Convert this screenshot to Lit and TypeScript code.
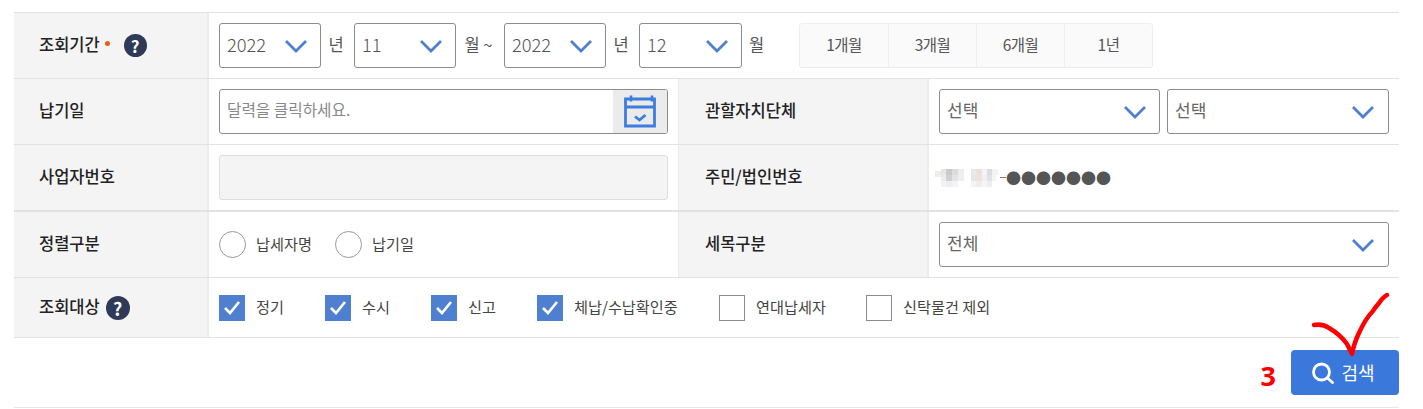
import { LitElement, html, css, svg } from 'lit';
import { customElement } from 'lit/decorators.js';

const chevron = html`<svg class="chev" width="24" height="14" viewBox="0 0 24 14" fill="none"><path d="M2 2l10 10L22 2" stroke="#4f80cf" stroke-width="2.8"/></svg>`;

const help = (size: number) => html`<span class="help" style="width:${size}px;height:${size}px;font-size:${size - 6}px">?</span>`;

const mosaic: [number, number, number, number, string][] = [
  [0, 2, 6, 6, '#f3ece8'], [6, 0, 5, 6, '#e6e6e8'], [11, 0, 6, 6, '#c9cad0'], [17, 0, 6, 6, '#dcdcdc'], [23, 0, 6, 6, '#ededed'],
  [6, 6, 5, 6, '#ececec'], [11, 6, 6, 6, '#d0d0d4'], [17, 6, 6, 6, '#e4e4e4'], [23, 6, 6, 6, '#efefef'],
  [6, 12, 5, 6, '#f2f2f2'], [11, 12, 6, 6, '#eeeeee'], [17, 12, 6, 6, '#f4f4f4'],
  [36, 0, 5, 6, '#e8e8e8'], [41, 0, 6, 6, '#ecdfd8'], [47, 0, 5, 6, '#eef4f9'], [52, 0, 5, 6, '#dcdcdc'], [57, 0, 6, 6, '#f2f2f2'],
  [36, 6, 5, 6, '#e6e6e6'], [41, 6, 6, 6, '#eee2da'], [47, 6, 5, 6, '#e9f2f9'], [52, 6, 5, 6, '#e2e2e2'], [57, 6, 4, 6, '#f4f4f4'],
  [36, 12, 5, 6, '#f3f3f3'], [41, 12, 6, 6, '#f0ece8'], [47, 12, 5, 6, '#f5f5f5'], [52, 12, 5, 6, '#eeeeee'],
];

@customElement('app-root')
export class AppRoot extends LitElement {
  static styles = css`
    :host {
      display: block;
      height: 409px;
      position: relative;
      overflow: hidden;
      background: #fff;
      font-family: "Noto Sans CJK KR", "Noto Sans", sans-serif;
      color: #555;
      font-size: 15px;
    }
    /* the CJK face sits low in its line box, this lifts the text */
    .t { padding-bottom: 4px; }
    .table {
      margin: 12px 24px 0 14px;
      border-top: 1px solid #e2e2e2;
      border-bottom: 1px solid #e2e2e2;
    }
    .row {
      display: grid;
      grid-template-columns: 195px 469px 251px 1fr;
      height: 65px;
      border-bottom: 1px solid #e2e2e2;
    }
    .row.full { grid-template-columns: 195px 1fr; }
    .row.thick { height: 65px; border-bottom-width: 2px; }
    .row.last { height: 59px; border-bottom: none; }
    .th {
      display: flex;
      align-items: center;
      gap: 6px;
      background: #f4f4f4;
      border-right: 2px solid #ececec;
      padding-left: 25px;
      font-size: 16.5px;
      font-weight: 500;
      color: #222;
    }
    .th.mid { border-left: 1px solid #ececec; padding-left: 26px; }
    .req { width: 5px; height: 5px; border-radius: 50%; background: #f05a14; margin: 0 8px 4px -1px; }
    .help {
      display: flex;
      align-items: center;
      justify-content: center;
      border-radius: 50%;
      background: #2f3a58;
      color: #fff;
      font-weight: 700;
      line-height: 1;
    }
    .td { display: flex; align-items: center; padding-left: 10px; }
    .td.right { padding: 0 10px; gap: 7px; }
    .sel {
      box-sizing: border-box;
      display: flex;
      align-items: center;
      justify-content: space-between;
      height: 45px;
      padding: 0 12px 0 7px;
      border: 1px solid #8c8c8c;
      border-radius: 3px;
      font-size: 17px;
      color: #666;
      background: #fff;
    }
    .sel.y { width: 102px; font-size: 18.3px; font-weight: 300; color: #555; }
    .sel.y.wide { width: 103px; }
    .sel.half { width: 221px; }
    .sel.grow { flex: 1; }
    .sel.grow .chev { margin-right: 1px; }
    .unit { box-sizing: border-box; width: 33px; padding-right: 3px; text-align: center; font-size: 16.5px; color: #555; }
    .unit.tilde { width: 48px; }
    .unit.gap { width: 57px; text-align: left; padding-left: 7px; padding-right: 0; }
    .periods { display: flex; height: 45px; box-sizing: border-box; border: 1px solid #eee; border-radius: 3px; background: #fafafa; }
    .periods span {
      display: flex;
      align-items: center;
      justify-content: center;
      box-sizing: border-box;
      width: 88px;
      padding-bottom: 3px;
      font-size: 15.5px;
      color: #555;
      letter-spacing: -0.5px;
    }
    .periods span + span { border-left: 1px solid #eee; }
    .input {
      box-sizing: border-box;
      display: flex;
      align-items: center;
      justify-content: space-between;
      width: 449px;
      height: 45px;
      border: 1px solid #8c8c8c;
      border-radius: 3px;
      padding-left: 7px;
      font-size: 15.7px;
      color: #888;
      overflow: hidden;
    }
    .cal {
      display: flex;
      align-items: center;
      justify-content: center;
      width: 54px;
      height: 100%;
      background: #ebebeb;
    }
    .input.off { background: #f4f4f4; border-color: #ddd; }
    .rrn { display: flex; align-items: center; padding-left: 6px; font-size: 15px; color: #555; }
    .mosaic { display: block; }
    .dash { width: 6px; height: 1px; background: #777; }
    .dots { font-size: 15px; line-height: 1; color: #555; }
    .opts { display: flex; align-items: center; }
    .radio { width: 25px; height: 25px; border: 1px solid #999; border-radius: 50%; margin-right: 10px; background: #fff; }
    .opt { display: flex; align-items: center; font-size: 15.2px; color: #444; }
    .box { box-sizing: border-box; width: 26px; height: 26px; margin-right: 11px; border: 1px solid #8c8c8c; background: #fff; }
    .box.on { display: flex; align-items: center; justify-content: center; border: none; background: #4f80cf; }
    .foot { display: flex; justify-content: flex-end; align-items: center; gap: 15px; margin: 12px 24px 0 14px; }
    .num { font-size: 27px; font-weight: 700; color: #f00; font-family: "Open Sans", sans-serif; line-height: 45px; position: relative; top: 3px; }
    .search {
      box-sizing: border-box;
      display: flex;
      align-items: center;
      justify-content: center;
      gap: 6px;
      width: 108px;
      height: 45px;
      padding-right: 4px;
      border-radius: 4px;
      background: #3a78db;
      color: #fff;
      font-size: 18px;
    }
    .search .t { padding-bottom: 2px; }
    .rule { height: 1px; background: #e8e8e8; margin: 12px 24px 0 14px; }
    .pen { position: absolute; left: 0; top: 0; pointer-events: none; }
  `;

  private sel(value: string, cls = 'y') {
    return html`<div class="sel ${cls}"><span class="t">${value}</span>${chevron}</div>`;
  }

  private check(label: string, on: boolean, width: number) {
    return html`<label class="opt" style="width:${width}px">
      <span class="box ${on ? 'on' : ''}">${on
        ? html`<svg width="18" height="16" viewBox="0 0 18 16" fill="none"><path d="M2 8l5 5 9-11" stroke="#fff" stroke-width="2.6"/></svg>`
        : ''}</span><span class="t">${label}</span></label>`;
  }

  render() {
    return html`
      <div class="table">
        <div class="row full">
          <div class="th"><span class="t">조회기간</span><span class="req"></span>${help(23)}</div>
          <div class="td">
            ${this.sel('2022')}<span class="unit t">년</span>
            ${this.sel('11')}<span class="unit tilde t">월 ~</span>
            ${this.sel('2022')}<span class="unit t">년</span>
            ${this.sel('12', 'y wide')}<span class="unit gap t">월</span>
            <div class="periods">
              <span>1개월</span><span>3개월</span><span>6개월</span><span>1년</span>
            </div>
          </div>
        </div>
        <div class="row">
          <div class="th"><span class="t">납기일</span></div>
          <div class="td">
            <div class="input">
              <span class="t">달력을 클릭하세요.</span>
              <span class="cal">
                <svg width="36" height="36" viewBox="0 0 36 36" fill="none" stroke="#3d7ddf" stroke-width="2.8">
                  <path d="M3.5 5h29v8h-29zM3.5 13v19h29V13"/>
                  <path d="M9 1.5v6M30 1.5v6" stroke-width="2.6"/>
                  <path d="M13 22.5l4.5 3.5 6-5"/>
                </svg>
              </span>
            </div>
          </div>
          <div class="th mid"><span class="t">관할자치단체</span></div>
          <div class="td right">${this.sel('선택', 'half')}${this.sel('선택', 'grow')}</div>
        </div>
        <div class="row thick">
          <div class="th"><span class="t">사업자번호</span></div>
          <div class="td"><div class="input off"></div></div>
          <div class="th mid"><span class="t">주민/법인번호</span></div>
          <div class="rrn">
            <svg class="mosaic" width="65" height="18" viewBox="0 0 65 18">
              ${mosaic.map(([x, y, w, h, c]) => svg`<rect x=${x} y=${y} width=${w} height=${h} fill=${c}></rect>`)}
            </svg>
            <span class="dash"></span>
            <span class="dots">●●●●●●●</span>
          </div>
        </div>
        <div class="row">
          <div class="th"><span class="t">정렬구분</span></div>
          <div class="td opts">
            <label class="opt" style="width:116px"><span class="radio"></span><span class="t">납세자명</span></label>
            <label class="opt"><span class="radio"></span><span class="t">납기일</span></label>
          </div>
          <div class="th mid"><span class="t">세목구분</span></div>
          <div class="td right">${this.sel('전체', 'grow')}</div>
        </div>
        <div class="row full last">
          <div class="th"><span class="t">조회대상</span>${help(24)}</div>
          <div class="td opts">
            ${this.check('정기', true, 106)}
            ${this.check('수시', true, 106)}
            ${this.check('신고', true, 106)}
            ${this.check('체납/수납확인중', true, 182)}
            ${this.check('연대납세자', false, 147)}
            ${this.check('신탁물건 제외', false, 160)}
          </div>
        </div>
      </div>
      <div class="foot">
        <span class="num">3</span>
        <div class="search">
          <svg width="24" height="22" viewBox="0 0 24 22" fill="none" stroke="#fff" stroke-width="2.8">
            <circle cx="10.5" cy="10" r="8"/>
            <path d="M16.5 16l5 4.5" stroke-linecap="round"/>
          </svg>
          <span class="t">검색</span>
        </div>
      </div>
      <div class="rule"></div>
      <svg class="pen" width="1423" height="409" fill="none">
        <path d="M1314 325c6-1 11 0 15 3 7 4 13 9 18 16l5 10c1-6 3-12 6-19 4-9 9-18 15-24 2-4 5-6 9-12 1-1 3-3 5-4"
          stroke="#f00" stroke-width="4.5" stroke-linecap="round" stroke-linejoin="round"/>
      </svg>
    `;
  }
}
